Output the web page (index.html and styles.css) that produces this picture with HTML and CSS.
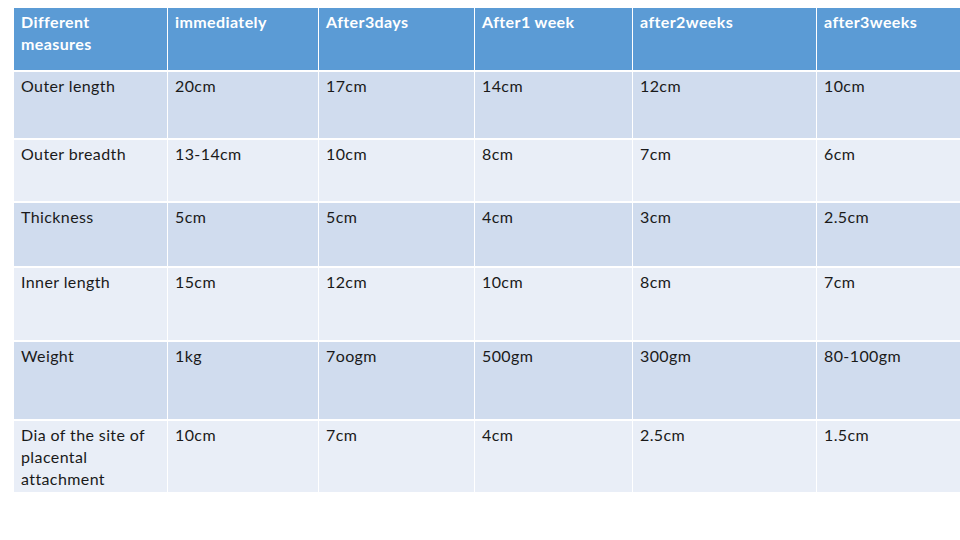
FILE: index.html
```html
<!DOCTYPE html>
<html>
<head>
<meta charset="utf-8">
<link rel="stylesheet" href="styles.css">
</head>
<body>
<div class="table">
  <div class="cell head">Different measures</div>
  <div class="cell head">immediately</div>
  <div class="cell head">After3days</div>
  <div class="cell head">After1 week</div>
  <div class="cell head">after2weeks</div>
  <div class="cell head">after3weeks</div>

  <div class="cell dark">Outer length</div>
  <div class="cell dark">20cm</div>
  <div class="cell dark">17cm</div>
  <div class="cell dark">14cm</div>
  <div class="cell dark">12cm</div>
  <div class="cell dark">10cm</div>

  <div class="cell light">Outer breadth</div>
  <div class="cell light">13-14cm</div>
  <div class="cell light">10cm</div>
  <div class="cell light">8cm</div>
  <div class="cell light">7cm</div>
  <div class="cell light">6cm</div>

  <div class="cell dark">Thickness</div>
  <div class="cell dark">5cm</div>
  <div class="cell dark">5cm</div>
  <div class="cell dark">4cm</div>
  <div class="cell dark">3cm</div>
  <div class="cell dark">2.5cm</div>

  <div class="cell light">Inner length</div>
  <div class="cell light">15cm</div>
  <div class="cell light">12cm</div>
  <div class="cell light">10cm</div>
  <div class="cell light">8cm</div>
  <div class="cell light">7cm</div>

  <div class="cell dark">Weight</div>
  <div class="cell dark">1kg</div>
  <div class="cell dark">7oogm</div>
  <div class="cell dark">500gm</div>
  <div class="cell dark">300gm</div>
  <div class="cell dark">80-100gm</div>

  <div class="cell light">Dia of the site of placental attachment</div>
  <div class="cell light">10cm</div>
  <div class="cell light">7cm</div>
  <div class="cell light">4cm</div>
  <div class="cell light">2.5cm</div>
  <div class="cell light">1.5cm</div>
</div>
</body>
</html>
```
FILE: styles.css
```css
html, body {
  margin: 0;
  background: #ffffff;
}
body {
  padding: 8px 0 0 14px;
  font-family: Lato, "Open Sans", sans-serif;
  font-size: 16px;
  letter-spacing: 0.4px;
  color: #1a1a1a;
}
.table {
  display: grid;
  grid-template-columns: 153px 150px 155px 157px 183px 143px;
  grid-template-rows: 62px 66px 61px 63px 72px 77px 71px;
  column-gap: 1px;
  row-gap: 2px;
  width: 946px;
}
.cell {
  padding: 3px 7px 0 7px;
  line-height: 22px;
}
.head {
  background: #5b9bd5;
  color: #ffffff;
  font-weight: bold;
}
.dark {
  background: #d0dcee;
}
.light {
  background: #e9eef7;
}
```
